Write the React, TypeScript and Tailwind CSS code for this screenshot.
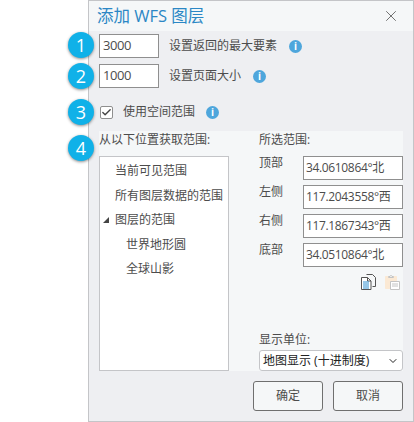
import { Check, X, ChevronDown } from "lucide-react";

const FONT = "font-['Open_Sans','Noto_Sans_CJK_SC',sans-serif]";

const EXTENT = [
  { label: "顶部", value: "34.0610864°北" },
  { label: "左侧", value: "117.2043558°西" },
  { label: "右侧", value: "117.1867343°西" },
  { label: "底部", value: "34.0510864°北" },
];

const BADGES = [
  { n: "1", cls: "top-[31px]" },
  { n: "2", cls: "top-[62px]" },
  { n: "3", cls: "top-[98px]" },
  { n: "4", cls: "top-[134px]" },
];

function InfoDot() {
  return (
    <span className="flex h-[13px] w-[13px] items-center justify-center rounded-full bg-[#4ea6dc] text-[10px] font-bold leading-none text-white">
      i
    </span>
  );
}

function CopyIcon() {
  return (
    <svg width="15" height="16" viewBox="0 0 15 16" fill="none">
      <path d="M5.5 .5h6l3 3v9h-3" stroke="#555" fill="#f5f7f8" />
      <path d="M.5 3.5h6l3.5 3.5v8.5H.5z" stroke="#555" fill="#fff" />
      <path d="M6.5 3.5V7H10" stroke="#555" />
      <path d="M2 8h6M2 10h6M2 12h6M2 14h6" stroke="#2f8fd0" />
    </svg>
  );
}

function PasteIcon() {
  return (
    <svg width="15" height="16" viewBox="0 0 15 16" fill="none">
      <path d="M.5 2.5h11v12H.5z" fill="#fbe9d4" stroke="#fbe9d4" />
      <path d="M3.5 3.5v-1h1.5a1 1 0 0 1 2 0h1.5v1z" fill="#fff" stroke="#c4c4c4" />
      <path d="M5.5 7.5h9v8h-9z" fill="#fff" stroke="#c4c4c4" />
      <path d="M7 10h6M7 12h6" stroke="#c4c4c4" />
    </svg>
  );
}

export default function App() {
  return (
    <div className={`${FONT} h-[422px] w-[414px] overflow-hidden bg-white pl-[88px] text-[12px] text-[#4c4c4c]`}>
      <div className="relative flex h-[422px] w-[326px] flex-col border border-[#c4c5c8] bg-[#eeeff2]">
        {BADGES.map((b) => (
          <div
            key={b.n}
            className={`absolute left-[-21px] flex h-[26px] w-[26px] items-center justify-center rounded-full bg-[#10b1e8] text-[18px] text-white shadow-[0_1px_3px_rgba(0,0,0,0.45)] ${b.cls}`}
          >
            {b.n}
          </div>
        ))}

        <div className="flex h-[30px] shrink-0 items-center justify-between bg-[#f5f7f8] pl-[8px] pr-[13px]">
          <span className="text-[16.5px] text-[#2b87c5]">添加 WFS 图层</span>
          <X size={18} strokeWidth={1.1} className="text-[#555]" />
        </div>

        <div className="flex flex-col pl-[10px] pr-[10px]">
          <div className="mt-[3px] flex items-center">
            <div className="flex h-[24px] w-[60px] items-center border border-[#8f8f8f] bg-white pl-[3px] text-[13px] tracking-[-0.4px]">3000</div>
            <span className="ml-[10px]">设置返回的最大要素</span>
            <span className="ml-[12px]"><InfoDot /></span>
          </div>
          <div className="mt-[6px] flex items-center">
            <div className="flex h-[24px] w-[60px] items-center border border-[#8f8f8f] bg-white pl-[3px] text-[13px] tracking-[-0.4px]">1000</div>
            <span className="ml-[10px]">设置页面大小</span>
            <span className="ml-[12px]"><InfoDot /></span>
          </div>
          <div className="ml-[1px] mt-[15px] flex h-[18px] items-center">
            <div className="flex h-[13px] w-[13px] items-center justify-center rounded-[2px] border border-[#8f8f8f] bg-white">
              <Check size={11} strokeWidth={3} className="text-[#444]" />
            </div>
            <span className="ml-[10px]">使用空间范围</span>
            <span className="ml-[11px]"><InfoDot /></span>
          </div>

          <div className="mt-[10px] flex h-[240px] bg-[#f5f7f8]">
            <div className="flex w-[160px] flex-col">
              <div className="flex h-[17px] items-center">从以下位置获取范围:</div>
              <div className="mt-[8px] flex h-[215px] w-[130px] flex-col border border-[#c4c5c8] bg-white pt-[2px]">
                <div className="flex h-[24.5px] items-center pl-[15px]">当前可见范围</div>
                <div className="flex h-[24.5px] items-center pl-[15px]">所有图层数据的范围</div>
                <div className="flex h-[24.5px] items-center pl-[3px]">
                  <span className="mr-[6px] h-0 w-0 border-b-[6px] border-l-[6px] border-b-[#444] border-l-transparent" />
                  图层的范围
                </div>
                <div className="flex h-[24.5px] items-center pl-[26px]">世界地形圆</div>
                <div className="flex h-[24.5px] items-center pl-[26px]">全球山影</div>
              </div>
            </div>

            <div className="flex flex-1 flex-col">
              <div className="flex h-[17px] items-center">所选范围:</div>
              <div className="mt-[8px] flex flex-col gap-[5px]">
                {EXTENT.map((row) => (
                  <div key={row.label} className="flex items-start">
                    <span className="w-[44px] leading-[14px]">{row.label}</span>
                    <div className="flex h-[24px] w-[100px] items-center border border-[#8f8f8f] bg-white pl-[2px] tracking-[-0.35px]">
                      {row.value}
                    </div>
                  </div>
                ))}
              </div>
              <div className="mt-[7px] flex justify-end gap-[9px] pr-[3px]">
                <CopyIcon />
                <PasteIcon />
              </div>
              <div className="mt-auto flex flex-col">
                <span className="mb-[1px]">显示单位:</span>
                <div className="flex h-[21px] w-[144px] items-center justify-between rounded-[3px] border border-[#c4c5c8] bg-white pl-[3px] pr-[3px] text-[#222]">
                  地图显示 (十进制度)
                  <ChevronDown size={12} strokeWidth={2} />
                </div>
              </div>
            </div>
          </div>

          <div className="mt-[10px] flex justify-end gap-[10px]">
            <button className="h-[30px] w-[70px] rounded-[3px] border border-[#6f6f6f] bg-[#f5f7f8] text-[#4c4c4c]">确定</button>
            <button className="h-[30px] w-[70px] rounded-[3px] border border-[#6f6f6f] bg-[#f5f7f8] text-[#4c4c4c]">取消</button>
          </div>
        </div>
      </div>
    </div>
  );
}
